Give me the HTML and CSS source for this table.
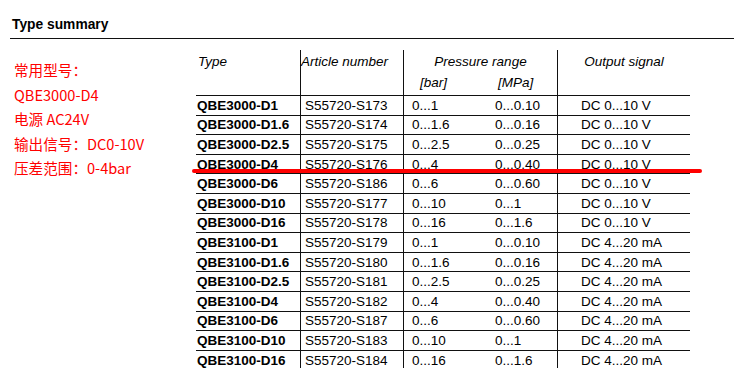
FILE: index.html
```html
<!DOCTYPE html>
<html lang="zh">
<head>
<meta charset="utf-8">
<title>Type summary</title>
<link rel="stylesheet" href="styles.css">
</head>
<body>
<div class="page">
  <h1 class="title">Type summary</h1>
  <div class="content">
    <div class="notes">
      <p>常用型号：</p>
      <p>QBE3000-D4</p>
      <p>电源 AC24V</p>
      <p>输出信号：DC0-10V</p>
      <p>压差范围：0-4bar</p>
    </div>
    <div class="table-wrap">
      <div class="grid">
        <div class="h c1 type">Type</div>
        <div class="h c2 art">Article number</div>
        <div class="h press">Pressure range</div>
        <div class="h c3 bar">[bar]</div>
        <div class="h c4 mpa">[MPa]</div>
        <div class="h c5 out">Output signal</div>

        <div class="d c1 b">QBE3000-D1</div><div class="d c2">S55720-S173</div><div class="d c3">0...1</div><div class="d c4">0...0.10</div><div class="d c5">DC 0...10 V</div>
        <div class="d c1 b">QBE3000-D1.6</div><div class="d c2">S55720-S174</div><div class="d c3">0...1.6</div><div class="d c4">0...0.16</div><div class="d c5">DC 0...10 V</div>
        <div class="d c1 b">QBE3000-D2.5</div><div class="d c2">S55720-S175</div><div class="d c3">0...2.5</div><div class="d c4">0...0.25</div><div class="d c5">DC 0...10 V</div>
        <div class="d c1 b">QBE3000-D4</div><div class="d c2">S55720-S176</div><div class="d c3">0...4</div><div class="d c4">0...0.40</div><div class="d c5">DC 0...10 V</div>
        <div class="d c1 b">QBE3000-D6</div><div class="d c2">S55720-S186</div><div class="d c3">0...6</div><div class="d c4">0...0.60</div><div class="d c5">DC 0...10 V</div>
        <div class="d c1 b">QBE3000-D10</div><div class="d c2">S55720-S177</div><div class="d c3">0...10</div><div class="d c4">0...1</div><div class="d c5">DC 0...10 V</div>
        <div class="d c1 b">QBE3000-D16</div><div class="d c2">S55720-S178</div><div class="d c3">0...16</div><div class="d c4">0...1.6</div><div class="d c5">DC 0...10 V</div>
        <div class="d c1 b">QBE3100-D1</div><div class="d c2">S55720-S179</div><div class="d c3">0...1</div><div class="d c4">0...0.10</div><div class="d c5">DC 4...20 mA</div>
        <div class="d c1 b">QBE3100-D1.6</div><div class="d c2">S55720-S180</div><div class="d c3">0...1.6</div><div class="d c4">0...0.16</div><div class="d c5">DC 4...20 mA</div>
        <div class="d c1 b">QBE3100-D2.5</div><div class="d c2">S55720-S181</div><div class="d c3">0...2.5</div><div class="d c4">0...0.25</div><div class="d c5">DC 4...20 mA</div>
        <div class="d c1 b">QBE3100-D4</div><div class="d c2">S55720-S182</div><div class="d c3">0...4</div><div class="d c4">0...0.40</div><div class="d c5">DC 4...20 mA</div>
        <div class="d c1 b">QBE3100-D6</div><div class="d c2">S55720-S187</div><div class="d c3">0...6</div><div class="d c4">0...0.60</div><div class="d c5">DC 4...20 mA</div>
        <div class="d c1 b">QBE3100-D10</div><div class="d c2">S55720-S183</div><div class="d c3">0...10</div><div class="d c4">0...1</div><div class="d c5">DC 4...20 mA</div>
        <div class="d c1 b">QBE3100-D16</div><div class="d c2">S55720-S184</div><div class="d c3">0...16</div><div class="d c4">0...1.6</div><div class="d c5">DC 4...20 mA</div>
      </div>
      <div class="marker"></div>
    </div>
  </div>
</div>
</body>
</html>
```

FILE: styles.css
```css
* { box-sizing: border-box; }
html, body { margin: 0; padding: 0; background: #fff; }
body {
  font-family: "Liberation Sans", Arial, sans-serif;
  color: #000;
  overflow: hidden;
}
.page {
  padding: 0 16px 0 10px;
}
.title {
  margin: 0;
  width: 724px;
  padding: 17px 0 5px 2px;
  font-size: 13.8px;
  line-height: 16px;
  font-weight: bold;
  color: #000;
  border-bottom: 1px solid #111;
}
.content {
  display: flex;
  margin-top: 11px;
}
.notes {
  width: 186px;
  padding: 8px 0 0 4px;
  color: #ff0000;
  font-family: "Noto Sans CJK SC", "Noto Sans", sans-serif;
  font-size: 14.6px;
  font-weight: 400;
  line-height: 24.5px;
}
.notes p { margin: 0; white-space: nowrap; }
.table-wrap {
  position: relative;
}
.grid {
  display: grid;
  grid-template-columns: 105px 103px 84px 70px 132px;
  grid-template-rows: 22px 24px repeat(14, 19.6px);
  font-size: 13.5px;
  line-height: 16px;
}
.h {
  font-style: italic;
  border-color: #111;
  border-style: solid;
  border-width: 0;
}
.type { grid-column: 1; grid-row: 1 / 3; padding: 4px 0 0 2px; border-bottom-width: 1px; border-right-width: 1px; }
.art { grid-column: 2; grid-row: 1 / 3; padding: 4px 0 0 0; border-bottom-width: 1px; border-right-width: 1px; }
.press { grid-column: 3 / 5; grid-row: 1; padding-top: 4px; text-align: center; border-right-width: 1px; }
.bar { grid-column: 3; grid-row: 2; padding: 3px 0 0 16px; border-bottom-width: 1px; }
.mpa { grid-column: 4; grid-row: 2; padding: 3px 0 0 10px; border-bottom-width: 1px; border-right-width: 1px; }
.out { grid-column: 5; grid-row: 1 / 3; padding-top: 4px; text-align: center; border-bottom-width: 1px; }
.d {
  display: flex;
  align-items: center;
  padding-top: 1px;
  white-space: nowrap;
  border-bottom: 1px solid #111;
}
.d.c1 { padding-left: 1px; border-right: 1px solid #111; }
.d.c2 { padding-left: 4px; border-right: 1px solid #111; }
.d.c3 { padding-left: 8px; }
.d.c4 { padding-left: 7px; border-right: 1px solid #111; }
.d.c5 { padding-left: 23px; }
.b { font-weight: bold; }
.marker {
  position: absolute;
  left: -4px;
  top: 118.5px;
  width: 510px;
  height: 4px;
  border-radius: 2px;
  background: #f00;
}
```
